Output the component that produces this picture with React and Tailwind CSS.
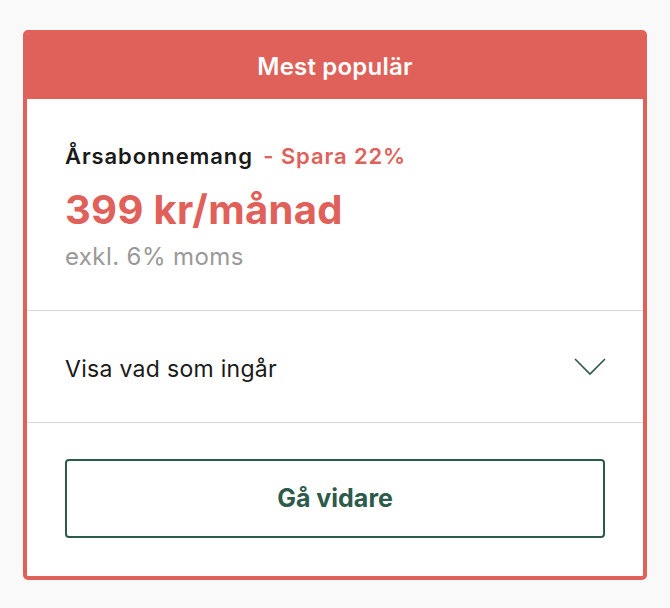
export default function App() {
  return (
    <div className="min-h-[608px] bg-[#f9f9f9] px-[23px] pt-[30px] font-['Inter',sans-serif]">
      <div className="w-[624px] h-[550px] rounded-[5px] border-4 border-[#e0605a] bg-white flex flex-col overflow-hidden">
        <div className="h-[65px] bg-[#e0605a] flex items-center justify-center text-white text-[24px] font-semibold tracking-[0.2px]">
          Mest populär
        </div>
        <div className="h-[212px] border-b border-[#d9d9d9] px-[38px] pt-[43px]">
          <div className="text-[22px] leading-[28px] font-semibold text-[#1a1a1a] tracking-[0.9px]">
            Årsabonnemang <span className="text-[#e0605a] ml-[4px]">- Spara 22%</span>
          </div>
          <div className="mt-[18px] text-[40px] leading-[44px] font-bold text-[#e0605a] tracking-[0.3px]">
            399 kr/månad
          </div>
          <div className="mt-[11px] text-[24px] leading-[28px] text-[#999999] tracking-[0.4px]">exkl. 6% moms</div>
        </div>
        <div className="h-[112px] border-b border-[#d9d9d9] px-[38px] flex items-center justify-between">
          <span className="mt-[5px] text-[23px] text-[#1a1a1a] tracking-[0.3px]">Visa vad som ingår</span>
          <svg width="32" height="18" viewBox="0 0 32 18" fill="none" className="mr-[-1px]">
            <path d="M1 1 L16 16 L31 1" stroke="#2d5a4a" strokeWidth="1.6" />
          </svg>
        </div>
        <div className="flex-1 px-[38px] pt-[36px]">
          <button className="w-full h-[79px] rounded-[4px] border-2 border-[#2d5a4a] text-[#2d5a4a] text-[25px] font-bold">
            Gå vidare
          </button>
        </div>
      </div>
    </div>
  )
}
